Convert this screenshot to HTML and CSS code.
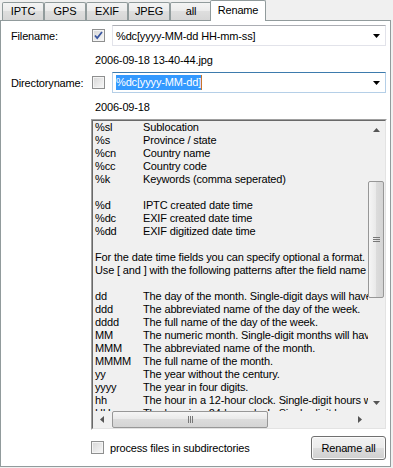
FILE: index.html
```html
<!DOCTYPE html>
<html>
<head>
	<meta charset="utf8">
	<title>Rename</title>
	<link rel="stylesheet" href="styles.css">
</head>
<body>
	<div class="tabs">
		<div class="tab">IPTC</div>
		<div class="tab">GPS</div>
		<div class="tab">EXIF</div>
		<div class="tab">JPEG</div>
		<div class="tab">all</div>
		<div class="tab selected">Rename</div>
	</div>

	<div class="panel">
		<div class="field">
			<span class="label">Filename:</span>
			<span class="check checked">
				<svg width="11" height="11" viewBox="0 0 11 11"><path d="M2 5.5 L4.2 8 L9 2" fill="none" stroke="#3a56a0" stroke-width="1.8"/></svg>
			</span>
			<div class="combo">
				<span class="combo-text">%dc[yyyy-MM-dd HH-mm-ss]</span>
				<svg class="combo-arrow" width="7" height="4" viewBox="0 0 7 4"><path d="M0 0 H7 L3.5 4 Z" fill="#000"/></svg>
			</div>
		</div>
		<div class="preview">2006-09-18 13-40-44.jpg</div>

		<div class="field">
			<span class="label">Directoryname:</span>
			<span class="check"></span>
			<div class="combo focused">
				<span class="combo-text"><span class="selection">%dc[yyyy-MM-dd]</span><span class="caret"></span></span>
				<svg class="combo-arrow" width="7" height="4" viewBox="0 0 7 4"><path d="M0 0 H7 L3.5 4 Z" fill="#000"/></svg>
			</div>
		</div>
		<div class="preview">2006-09-18</div>

		<div class="listbox">
			<div class="listbox-inner">
				<div class="list-text">
					<div class="line"><span class="code">%sl</span>Sublocation</div>
					<div class="line"><span class="code">%s</span>Province / state</div>
					<div class="line"><span class="code">%cn</span>Country name</div>
					<div class="line"><span class="code">%cc</span>Country code</div>
					<div class="line"><span class="code">%k</span>Keywords (comma seperated)</div>
					<div class="line"></div>
					<div class="line"><span class="code">%d</span>IPTC created date time</div>
					<div class="line"><span class="code">%dc</span>EXIF created date time</div>
					<div class="line"><span class="code">%dd</span>EXIF digitized date time</div>
					<div class="line"></div>
					<div class="line">For the date time fields you can specify optional a format.</div>
					<div class="line">Use [ and ] with the following patterns after the field name</div>
					<div class="line"></div>
					<div class="line"><span class="code">dd</span>The day of the month. Single-digit days will have a leading zero.</div>
					<div class="line"><span class="code">ddd</span>The abbreviated name of the day of the week.</div>
					<div class="line"><span class="code">dddd</span>The full name of the day of the week.</div>
					<div class="line"><span class="code">MM</span>The numeric month. Single-digit months will have a leading zero.</div>
					<div class="line"><span class="code">MMM</span>The abbreviated name of the month.</div>
					<div class="line"><span class="code">MMMM</span>The full name of the month.</div>
					<div class="line"><span class="code">yy</span>The year without the century.</div>
					<div class="line"><span class="code">yyyy</span>The year in four digits.</div>
					<div class="line"><span class="code">hh</span>The hour in a 12-hour clock. Single-digit hours will have a leading zero.</div>
					<div class="line"><span class="code">HH</span>The hour in a 24-hour clock. Single-digit hours will have a leading zero.</div>
				</div>

				<div class="vscroll">
					<div class="sbtn"><svg width="7" height="4" viewBox="0 0 7 4"><path d="M3.5 0 L7 4 H0 Z" fill="#555"/></svg></div>
					<div class="vtrack">
						<div class="vthumb">
							<svg width="7" height="7" viewBox="0 0 7 7"><path d="M0 1.5 H7 M0 3.5 H7 M0 5.5 H7" stroke="#777" stroke-width="1"/></svg>
						</div>
					</div>
					<div class="sbtn"><svg width="7" height="4" viewBox="0 0 7 4"><path d="M0 0 H7 L3.5 4 Z" fill="#555"/></svg></div>
				</div>

				<div class="hscroll">
					<div class="sbtn"><svg width="4" height="7" viewBox="0 0 4 7"><path d="M0 3.5 L4 0 V7 Z" fill="#555"/></svg></div>
					<div class="htrack">
						<div class="hthumb">
							<svg width="7" height="7" viewBox="0 0 7 7"><path d="M1.5 0 V7 M3.5 0 V7 M5.5 0 V7" stroke="#777" stroke-width="1"/></svg>
						</div>
					</div>
					<div class="sbtn"><svg width="4" height="7" viewBox="0 0 4 7"><path d="M4 3.5 L0 0 V7 Z" fill="#555"/></svg></div>
				</div>
				<div class="corner"></div>
			</div>
		</div>

		<div class="bottom">
			<label class="sub">
				<span class="check"></span>
				process files in subdirectories
			</label>
			<div class="button">Rename all</div>
		</div>
	</div>
</body>
</html>
```

FILE: styles.css
```css
html, body {
	margin: 0;
	padding: 0;
}
body {
	font-family: "Liberation Sans", Arial, sans-serif;
	font-size: 11px;
	letter-spacing: -0.15px;
	color: #000;
	background: #f0f0f0;
	width: 393px;
	height: 468px;
	overflow: hidden;
}

/* Tab strip */
.tabs {
	display: flex;
	align-items: flex-end;
	height: 20px;
	padding-left: 2px;
}
.tab {
	box-sizing: border-box;
	width: 42px;
	height: 18px;
	border: 1px solid #919b9c;
	border-bottom: none;
	border-radius: 2px 2px 0 0;
	background: linear-gradient(#f4f4f4, #ebebeb 50%, #dedede 50%, #d6d6d6);
	text-align: center;
	line-height: 17px;
}
.tab.selected {
	position: relative;
	z-index: 1;
	width: 56px;
	height: 21px;
	margin: 0 0 -1px -2px;
	background: #fff;
	line-height: 19px;
	padding-bottom: 2px;
}

/* Page of the tab control */
.panel {
	box-sizing: border-box;
	width: 391px;
	height: 447px;
	border: 1px solid #919b9c;
	background: #fff;
	padding: 4px 4px 0 10px;
}

.field {
	display: flex;
	align-items: center;
	height: 21px;
}
.label {
	width: 81px;
	flex: 0 0 auto;
}
.check {
	box-sizing: border-box;
	display: inline-flex;
	align-items: center;
	justify-content: center;
	width: 13px;
	height: 13px;
	flex: 0 0 auto;
	border: 1px solid #8e8f8f;
	background: linear-gradient(135deg, #d6d6d6, #f8f8f8);
	box-shadow: inset 0 0 0 1px #f4f4f4;
	margin-right: 7px;
}
.combo {
	box-sizing: border-box;
	flex: 1 1 auto;
	height: 21px;
	display: flex;
	align-items: center;
	border: 1px solid #e2e3ea;
	border-top-color: #abadb3;
	padding: 0 4px 0 3px;
}
.combo.focused {
	border-color: #b5cfe7;
	border-top-color: #3d7bad;
}
.combo-text {
	flex: 1 1 auto;
	display: flex;
	align-items: center;
}
.selection {
	background: #3399ff;
	color: #fff;
	line-height: 15px;
}
.caret {
	width: 1px;
	height: 15px;
	background: #c8752a;
}
.combo-arrow {
	flex: 0 0 auto;
	margin-right: 1px;
}

.preview {
	margin-left: 84px;
	line-height: 13px;
	margin-top: 8px;
	margin-bottom: 5px;
}
.preview + .listbox {
	margin-top: 1px;
}

/* Multi line help box with scroll bars */
.listbox {
	box-sizing: border-box;
	margin-left: 80px;
	margin-right: -1px;
	height: 311px;
	border: 1px solid #a0a0a0;
	border-right-color: #fff;
	border-bottom-color: #fff;
}
.listbox-inner {
	box-sizing: border-box;
	height: 100%;
	border: 1px solid #696969;
	border-right-color: #e3e3e3;
	border-bottom-color: #e3e3e3;
	background: #f0f0f0;
	display: grid;
	grid-template-columns: 1fr 17px;
	grid-template-rows: 1fr 17px;
}
.list-text {
	overflow: hidden;
	white-space: nowrap;
	padding-left: 2px;
	line-height: 13px;
}
.line {
	height: 13px;
}
.code {
	display: inline-block;
	width: 48px;
}

.vscroll {
	display: flex;
	flex-direction: column;
	background: #f0f0f0;
}
.hscroll {
	display: flex;
	background: #f0f0f0;
}
.sbtn {
	width: 17px;
	height: 17px;
	flex: 0 0 auto;
	display: flex;
	align-items: center;
	justify-content: center;
}
.vtrack {
	flex: 1 1 auto;
	padding-top: 43px;
}
.vthumb {
	box-sizing: border-box;
	height: 117px;
	margin: 0 1px 0 0;
	border: 1px solid #979797;
	border-radius: 2px;
	background: linear-gradient(to right, #f5f5f5, #e9e9e9 50%, #dcdcdc 50%, #d4d4d4);
	display: flex;
	align-items: center;
	justify-content: center;
}
.htrack {
	flex: 1 1 auto;
	padding-left: 2px;
}
.hthumb {
	box-sizing: border-box;
	width: 156px;
	height: 17px;
	border: 1px solid #979797;
	border-radius: 2px;
	background: linear-gradient(#f5f5f5, #e9e9e9 50%, #dcdcdc 50%, #d4d4d4);
	display: flex;
	align-items: center;
	justify-content: center;
}
.corner {
	background: #f0f0f0;
}

/* Bottom row */
.bottom {
	display: flex;
	align-items: center;
	justify-content: space-between;
	margin: 5px 0 0 80px;
	height: 25px;
}
.sub {
	display: flex;
	align-items: center;
}
.sub .check {
	margin-right: 6px;
}
.button {
	box-sizing: border-box;
	width: 75px;
	height: 24px;
	border: 1px solid #707070;
	border-radius: 3px;
	background: linear-gradient(#f2f2f2, #ebebeb 50%, #dddddd 50%, #cfcfcf);
	box-shadow: inset 0 0 0 1px #fbfbfb;
	display: flex;
	align-items: center;
	justify-content: center;
}
```
